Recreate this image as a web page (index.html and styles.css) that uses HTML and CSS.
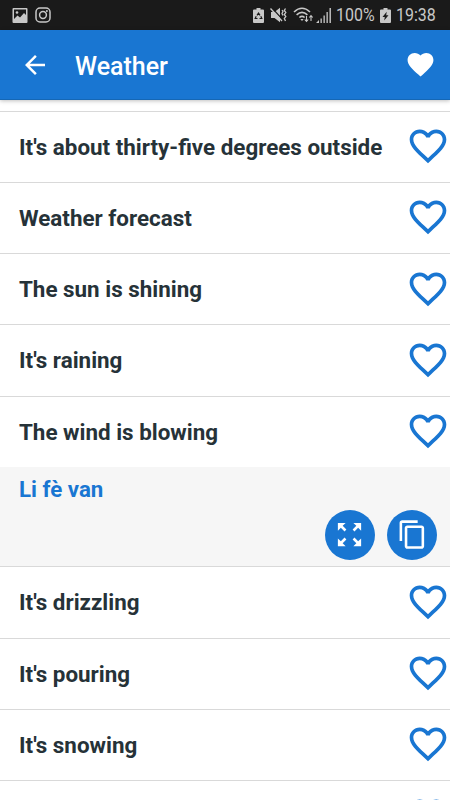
FILE: index.html
```html
<!DOCTYPE html>
<html lang="en">
<head>
  <meta charset="UTF-8" />
  <meta name="viewport" content="width=device-width, initial-scale=1.0" />
  <title>Weather</title>
  <link rel="stylesheet" href="styles.css">
</head>
<body>
  <svg class="defs" width="0" height="0">
    <symbol id="heart-outline" viewBox="0 0 24 24">
      <path d="M16.5 3c-1.74 0-3.41.81-4.5 2.09C10.91 3.81 9.24 3 7.5 3 4.42 3 2 5.42 2 8.5c0 3.78 3.4 6.86 8.55 11.54L12 21.35l1.45-1.32C18.6 15.36 22 12.28 22 8.5 22 5.42 19.58 3 16.5 3zm-4.4 15.55l-.1.1-.1-.1C7.14 14.24 4 11.39 4 8.5 4 6.5 5.5 5 7.5 5c1.54 0 3.04.99 3.57 2.36h1.87C13.46 5.99 14.96 5 16.5 5c2 0 3.5 1.5 3.5 3.5 0 2.89-3.14 5.74-7.9 10.05z"/>
    </symbol>
  </svg>

  <div class="status-bar">
    <svg class="picture" viewBox="0 0 16 15">
      <path fill-rule="evenodd" d="M1.5 0h13a1 1 0 0 1 1 1v13a1 1 0 0 1-1 1h-13a1 1 0 0 1-1-1V1a1 1 0 0 1 1-1zM2 1.5V11l3.500-3.500 2.500 2 4-4.500 2 2V1.500z"/>
      <circle cx="5" cy="4.5" r="1.3"/>
    </svg>
    <svg class="insta" viewBox="0 0 16 16">
      <rect x="1" y="1" width="14" height="14" rx="4"/>
      <circle cx="8" cy="8" r="3.4"/>
      <circle class="dot" cx="11.9" cy="4.1" r="1"/>
    </svg>
    <div class="spacer"></div>
    <svg class="battery" viewBox="0 0 11 15">
      <path d="M3.5 0h4v1.500H10a1 1 0 0 1 1 1V14a1 1 0 0 1-1 1H1a1 1 0 0 1-1-1V2.500a1 1 0 0 1 1-1h2.500z"/>
      <path class="cut-line" d="M4 7.300 5.500 5l1.500 2.300M7.800 8.300l1 2.200H6.500M4.500 10.500H2.200l1-2.200"/>
    </svg>
    <svg class="mute" viewBox="0 0 17 16">
      <path d="M1 5h3.500L10 .8v14.400L4.500 11H1z"/>
      <path class="slash-gap" d="M2 1 13 13"/>
      <path class="wave" d="M.5 1.500 12 14"/>
      <path class="wave" d="M12 3l1 1.500-1 2 1 2M15.500 1.500l-1.200 2 1.500 2-1.500 2 1.500 2-1.500 2 1.200 2.500"/>
    </svg>
    <svg class="wifi" viewBox="0 0 21 16">
      <path class="arc" d="M1 5q8-7.500 16 0M3.600 7.800q5.400-4.800 10.800 0M6.400 10.500q2.600-2.300 5.200 0"/>
      <path d="M7.300 12h3.400L9 14z"/>
      <path class="arrows" d="M13.500 9v5.500m-1.700-2 1.700 2 1.700-2M18 14V8.500m-1.700 2 1.700-2 1.700 2"/>
    </svg>
    <svg class="signal" viewBox="0 0 15 15">
      <path d="M0 15l3-3v3zM4.500 10.500h1.300V15H4.500zM7.500 7.500h1.300V15H7.500zM10.500 4h1.300v11h-1.300zM13.500 0h1.400v15h-1.400z"/>
    </svg>
    <div class="status-text percent"><span>100%</span></div>
    <svg class="battery charge" viewBox="0 0 11 15">
      <path d="M3.5 0h4v1.500H10a1 1 0 0 1 1 1V14a1 1 0 0 1-1 1H1a1 1 0 0 1-1-1V2.500a1 1 0 0 1 1-1h2.500z"/>
      <path class="cut" d="M6.700 3.800 2.500 9h2.300l-.6 3.500L8.500 7.300H6.200z"/>
    </svg>
    <div class="status-text clock"><span>19:38</span></div>
  </div>

  <header class="toolbar">
    <svg class="back" viewBox="0 0 24 24"><path d="M20 11H7.830l5.590-5.590L12 4l-8 8 8 8 1.410-1.410L7.830 13H20v-2z"/></svg>
    <h1>Weather</h1>
    <svg class="favorites" viewBox="0 0 24 24"><path d="M12 21.350l-1.450-1.320C5.400 15.360 2 12.280 2 8.500 2 5.420 4.420 3 7.500 3c1.740 0 3.410.81 4.500 2.090C13.090 3.810 14.760 3 16.500 3 19.580 3 22 5.420 22 8.500c0 3.780-3.400 6.860-8.550 11.540L12 21.350z"/></svg>
  </header>

  <main class="phrases">
    <div class="row"><span>It's about thirty-five degrees outside</span><svg class="heart"><use href="#heart-outline"/></svg></div>
    <div class="row"><span>Weather forecast</span><svg class="heart"><use href="#heart-outline"/></svg></div>
    <div class="row"><span>The sun is shining</span><svg class="heart"><use href="#heart-outline"/></svg></div>
    <div class="row"><span>It's raining</span><svg class="heart"><use href="#heart-outline"/></svg></div>
    <div class="row"><span>The wind is blowing</span><svg class="heart"><use href="#heart-outline"/></svg></div>
    <div class="translation">
      <p>Li fè van</p>
      <div class="actions">
        <button aria-label="Full screen">
          <svg class="expand" viewBox="0 0 24 24"><path d="M15 3l2.300 2.300-2.890 2.870 1.420 1.420L18.700 6.700 21 9V3zM3 9l2.300-2.300 2.870 2.890 1.420-1.420L6.700 5.300 9 3H3zM9 21l-2.300-2.300 2.890-2.870-1.420-1.420L5.300 17.300 3 15v6zM21 15l-2.300 2.300-2.870-2.890-1.420 1.420 2.890 2.870L15 21h6z"/></svg>
        </button>
        <button aria-label="Copy">
          <svg class="copy" viewBox="0 0 24 24"><path d="M16 1H4c-1.100 0-2 .9-2 2v14h2V3h12V1zm3 4H8c-1.100 0-2 .9-2 2v14c0 1.100.9 2 2 2h11c1.100 0 2-.9 2-2V7c0-1.100-.9-2-2-2zm0 16H8V7h11v14z"/></svg>
        </button>
      </div>
    </div>
    <div class="row"><span>It's drizzling</span><svg class="heart"><use href="#heart-outline"/></svg></div>
    <div class="row"><span>It's pouring</span><svg class="heart"><use href="#heart-outline"/></svg></div>
    <div class="row"><span>It's snowing</span><svg class="heart"><use href="#heart-outline"/></svg></div>
    <div class="row"><span></span><svg class="heart"><use href="#heart-outline"/></svg></div>
  </main>
</body>
</html>
```
FILE: styles.css
```css
body, html {
  margin: 0;
  padding: 0;
  height: 100vh;
  overflow: hidden;
  background: #fff;
  font-family: Roboto, sans-serif;
}

body {
  display: flex;
  flex-direction: column;
}

.defs {
  display: none;
}

svg {
  display: block;
  flex: none;
}

.status-bar {
  flex: none;
  display: flex;
  align-items: center;
  box-sizing: border-box;
  height: 30px;
  padding: 0 12px;
  background: #1a1a1a;
  color: #c8c8c8;
  fill: #c8c8c8;
}

.picture {
  width: 16px;
  height: 15px;
}

.insta {
  width: 16px;
  height: 16px;
  margin-left: 7px;
  fill: none;
  stroke: #c8c8c8;
  stroke-width: 1.5;
}

.insta .dot {
  fill: #c8c8c8;
  stroke: none;
}

.spacer {
  flex: 1;
}

.battery {
  width: 11px;
  height: 15px;
}

.cut {
  fill: #1a1a1a;
}

.cut-line {
  fill: none;
  stroke: #1a1a1a;
  stroke-width: 1.2;
}

.mute {
  width: 17px;
  height: 16px;
  margin-left: 6px;
}

.slash-gap {
  fill: none;
  stroke: #1a1a1a;
  stroke-width: 1.2;
}

.wave {
  fill: none;
  stroke: #c8c8c8;
  stroke-width: 1.3;
}

.wifi {
  width: 21px;
  height: 16px;
  margin-left: 6px;
}

.arc {
  fill: none;
  stroke: #c8c8c8;
  stroke-width: 1.6;
}

.arrows {
  fill: none;
  stroke: #c8c8c8;
  stroke-width: 1.1;
}

.signal {
  width: 15px;
  height: 15px;
  margin-left: 2px;
}

.status-text {
  font-size: 19px;
  line-height: 30px;
}

.status-text span {
  display: inline-block;
  transform: scaleX(.84);
  transform-origin: left;
}

.percent {
  width: 39px;
  margin-left: 5px;
}

.charge {
  margin-left: 5px;
}

.clock {
  width: 42px;
  margin-left: 5px;
}

.toolbar {
  flex: none;
  z-index: 1;
  display: flex;
  align-items: center;
  box-sizing: border-box;
  height: 70px;
  padding: 0 14px 0 20px;
  border-bottom: 1px solid #1567b5;
  background: #1976d2;
  color: #fff;
  fill: #fff;
  box-shadow: 0 1px 4px rgba(0, 0, 0, .25);
}

.toolbar h1 {
  flex: 1;
  margin: 4px 0 0 25px;
  font-size: 25px;
  font-weight: 500;
}

.back {
  width: 30px;
  height: 30px;
}

.favorites {
  width: 31px;
  height: 31px;
}

.phrases {
  flex: 1;
  min-height: 0;
  overflow: hidden;
  padding-top: 10.6px;
}

.row {
  display: flex;
  align-items: center;
  justify-content: space-between;
  box-sizing: border-box;
  height: 71.25px;
  padding-left: 19px;
  border-top: 1px solid #d9d9d9;
  color: #263238;
  font-size: 22.4px;
  font-weight: 700;
  white-space: nowrap;
}

.heart {
  width: 44px;
  height: 44px;
  margin-bottom: 1px;
  fill: #1976d2;
}

.translation {
  box-sizing: border-box;
  height: 99.5px;
  padding: 8px 13px 0 19px;
  background: #f6f6f6;
}

.translation p {
  margin: 0;
  color: #1976d2;
  font-size: 22.3px;
  font-weight: 700;
  line-height: 28px;
}

.actions {
  display: flex;
  justify-content: flex-end;
  gap: 12.5px;
  margin-top: 7px;
}

.actions button {
  display: flex;
  align-items: center;
  justify-content: center;
  width: 50px;
  height: 50px;
  padding: 0;
  border: none;
  border-radius: 50%;
  background: #1976d2;
  fill: #fff;
}

.expand, .copy {
  width: 31px;
  height: 31px;
}
```
